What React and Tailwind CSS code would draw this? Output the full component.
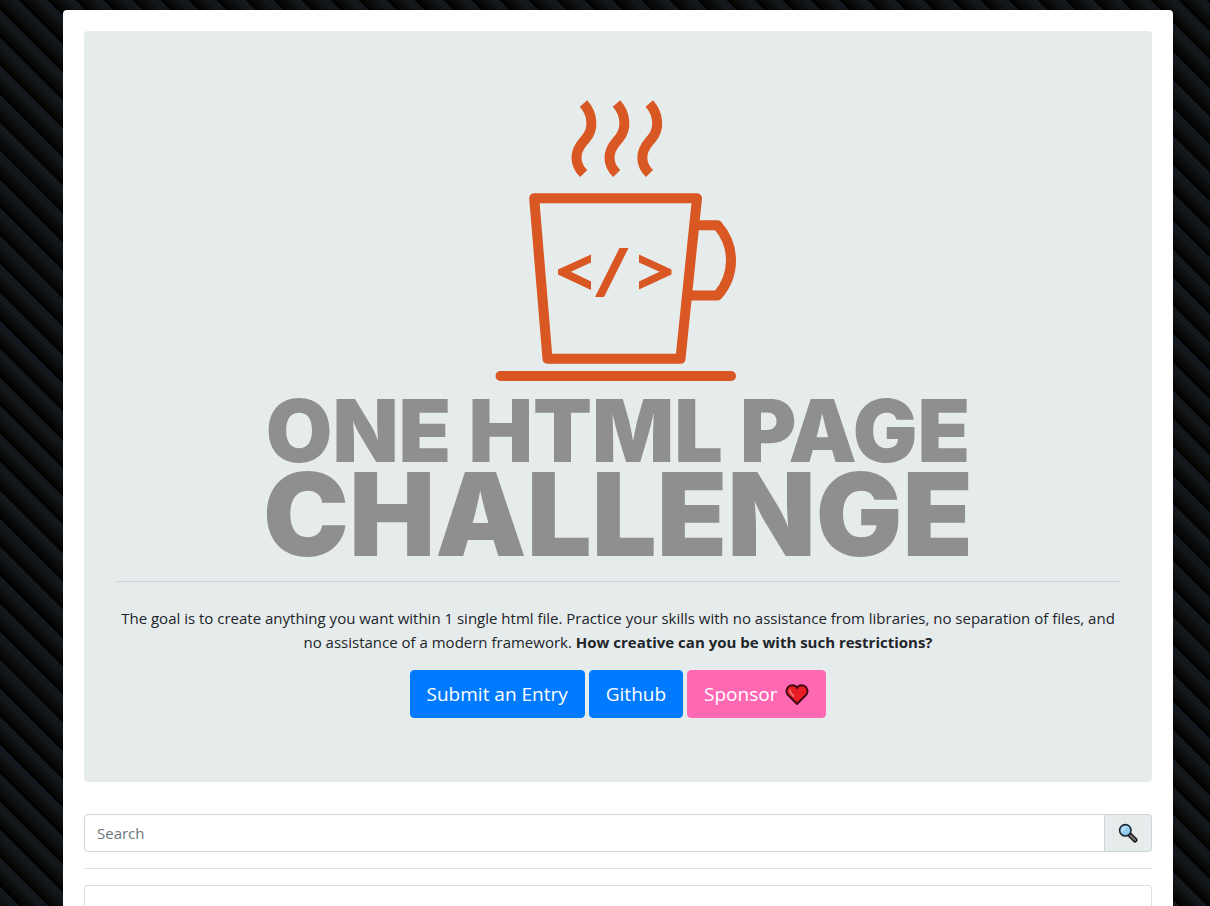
function MugLogo() {
  return (
    <svg
      className="mx-auto block h-[286px] w-[246px]"
      viewBox="495 96 246 286"
      fill="none"
      stroke="#d95722"
      strokeWidth="10"
      aria-hidden="true"
    >
      <path d="M583.5 103.5 C593 114 594 129 586 138.500 L583 142 C574.500 152 574 164 583.700 173.500" />
      <path d="M616.500 103.500 C626 114 627 129 619 138.500 L616 142 C607.500 152 607 164 616.700 173.500" />
      <path d="M649.300 103.500 C658.800 114 659.800 129 651.800 138.500 L648.800 142 C640.300 152 639.800 164 649.500 173.500" />
      <path d="M534.200 198.200 H697 L680.500 358.700 H547.500 Z" strokeLinejoin="round" />
      <path d="M696 225.300 H717.500 C735.500 246 735.500 275 717.500 295.500 H691" strokeLinejoin="round" />
      <path d="M500.500 376 H731" strokeLinecap="round" />
      <g fill="#d95722" stroke="none">
        <path d="M591 254.500 V262.500 L571 271.800 L591 281.500 V290 L558 274.500 V269.500 Z" />
        <path d="M639 254.500 V262.500 L659.500 271.800 L639 281.500 V289.500 L671.500 274.500 V269.500 Z" />
        <path d="M619.500 248 H628.500 L604 297 H595 Z" />
      </g>
    </svg>
  );
}

function Heart() {
  return (
    <svg className="h-6 w-6" viewBox="0 0 24 24" aria-hidden="true">
      <path
        d="M12 22 L2.500 12.500 C0.500 9.500 1.500 5 5 3.700 C8 2.700 10.800 3.800 12 6 C13.200 3.800 16 2.700 19 3.700 C22.500 5 23.500 9.500 21.500 12.500 Z"
        fill="#e81c24"
        stroke="#3d0a14"
        strokeWidth="1.800"
        strokeLinejoin="round"
      />
      <path d="M5 8.500 C5 10.500 6 11.500 8.500 14" fill="none" stroke="#f2707a" strokeWidth="1.800" strokeLinecap="round" />
    </svg>
  );
}

function Magnifier() {
  return (
    <svg className="h-5 w-5" viewBox="0 0 20 20" aria-hidden="true">
      <path d="M12 12 L17 17" stroke="#151515" strokeWidth="5" strokeLinecap="round" />
      <path d="M12.500 12.500 L17 17" stroke="#777" strokeWidth="2.200" strokeLinecap="round" />
      <circle cx="7.300" cy="7.300" r="5.700" fill="#92cbf0" stroke="#1c2730" strokeWidth="1.600" />
      <path d="M3.500 10 L10 3.500 A5 5 0 0 0 3.500 10" fill="#b9def5" />
    </svg>
  );
}

export default function App() {
  return (
    <div className="flex min-h-screen flex-col bg-[repeating-linear-gradient(45deg,#0a0a08_0px,#0d0f10_4px,#12171c_8px,#12181d_14px,#000000_14px,#030303_16px,#0a0a08_20px)] bg-fixed pt-[10px] pr-[37px] pl-[63px] font-['Open_Sans','Noto_Sans',sans-serif] text-[15px] leading-6 text-[#212529]">
      <main className="flex flex-1 flex-col rounded-t bg-white px-[21px] pt-[21px]">
        <header className="rounded bg-[#e6ebec] px-8 pt-[65px] pb-16 text-center">
          <MugLogo />
          <h1 className="mt-[13px] font-['Inter',sans-serif] font-black text-[#8e8f8e]">
            <span className="block text-[86px] leading-[72px] whitespace-nowrap">ONE HTML PAGE</span>
            <span className="block pt-1 text-[115px] leading-[88px] whitespace-nowrap">CHALLENGE</span>
          </h1>
          <hr className="mt-[22px] border-[#cfd3d5]" />
          <p className="mt-6">
            The goal is to create anything you want within 1 single html file. Practice your skills with no assistance
            from libraries, no separation of files, and no assistance of a modern framework.{" "}
            <strong className="font-bold">How creative can you be with such restrictions?</strong>
          </p>
          <nav className="mt-4 flex flex-wrap justify-center gap-1 text-[19px] leading-[30px] text-white">
            <a href="#submit" className="rounded border border-[#007bff] bg-[#007bff] px-4 py-2">Submit an Entry</a>
            <a href="#github" className="rounded border border-[#007bff] bg-[#007bff] px-4 py-2">Github</a>
            <a href="#sponsor" className="flex items-center gap-2 rounded border border-[#ff69b4] bg-[#ff69b4] px-4 py-2">
              Sponsor
              <Heart />
            </a>
          </nav>
        </header>
        <form className="mt-8 flex" onSubmit={(e) => e.preventDefault()}>
          <input
            type="search"
            aria-label="Search"
            placeholder="Search"
            className="h-[38px] min-w-0 flex-1 rounded-l border border-[#ced4da] bg-white px-3 placeholder:text-[#6c757d]"
          />
          <button
            type="submit"
            aria-label="Submit search"
            className="flex h-[38px] w-[47px] items-center justify-center rounded-r border border-l-0 border-[#ced4da] bg-[#e6ebec]"
          >
            <Magnifier />
          </button>
        </form>
        <hr className="mt-4 border-[#e0e1e2]" />
        <section aria-label="Entries" className="mt-4 min-h-5 flex-1 rounded-t border border-b-0 border-[#dcddde] bg-white" />
      </main>
    </div>
  );
}
